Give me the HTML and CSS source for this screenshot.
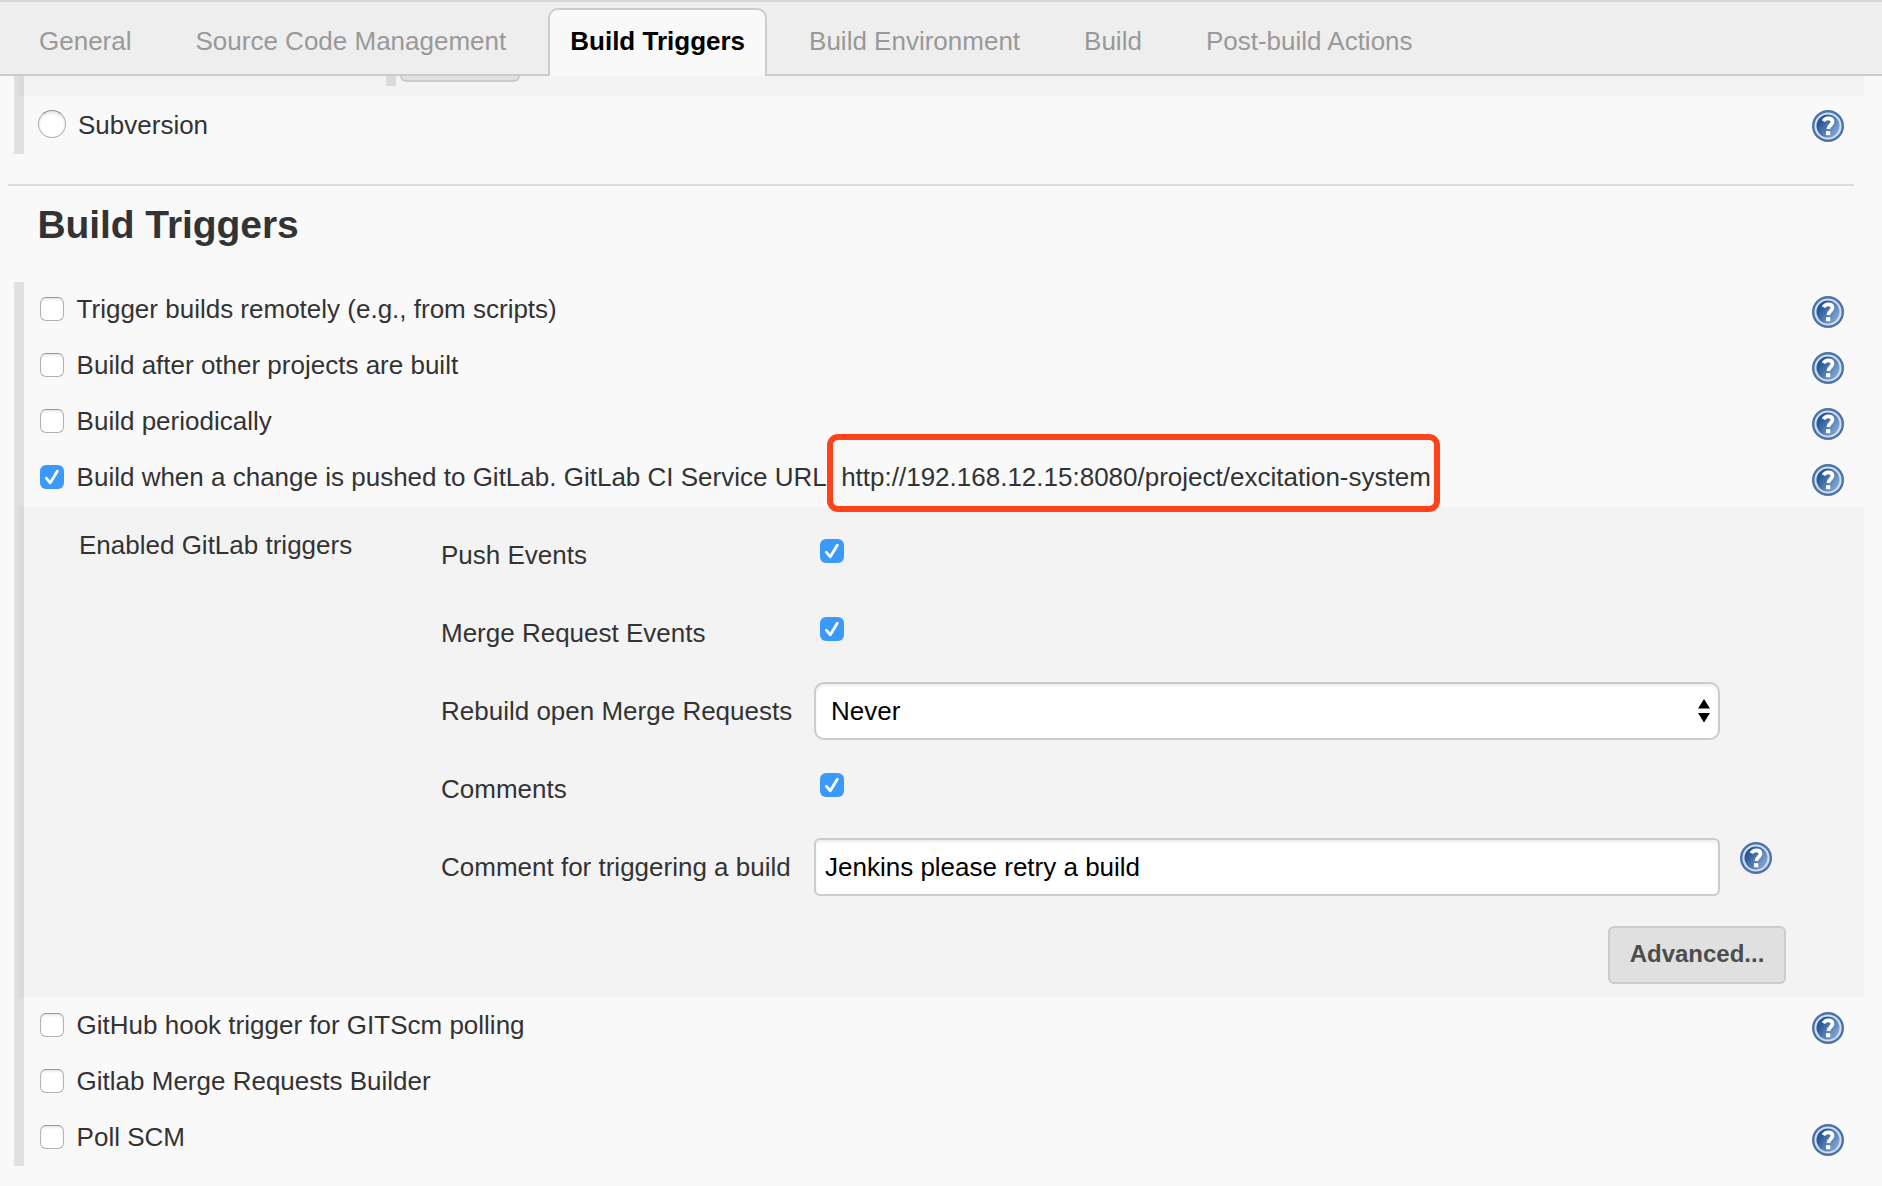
FILE: index.html
```html
<!DOCTYPE html>
<html lang="en">
<head>
<meta charset="utf-8">
<title>Build Triggers</title>
<link rel="stylesheet" href="styles.css">
</head>
<body>
<svg width="0" height="0" class="defs">
  <defs>
    <linearGradient id="blue" x1="0.05" y1="0.2" x2="0.95" y2="0.8">
      <stop offset="0.15" stop-color="#2a5796"/>
      <stop offset="1" stop-color="#86aad6"/>
    </linearGradient>
    <symbol id="help" viewBox="0 0 32 32">
      <circle cx="16" cy="16" r="16" fill="#4a72ab"/>
      <circle cx="16" cy="16" r="13.6" fill="#d3dfee"/>
      <circle cx="16" cy="16" r="11.5" fill="url(#blue)"/>
      <path d="M11.4 11.2C12.4 9.300 14 8.300 16.200 8.300c2.600 0 4.300 1.400 4.300 3.500 0 3.200-4.200 3.400-4.200 7.200" fill="none" stroke="#fff" stroke-width="3.7"/>
      <rect x="14" y="21.200" width="4.300" height="4" fill="#fff"/>
    </symbol>
    <symbol id="tick" viewBox="0 0 24 24">
      <path d="M6.3 13.2l4 4.6L17.3 6.3" fill="none" stroke="#fff" stroke-width="2.8" stroke-linecap="round" stroke-linejoin="round"/>
    </symbol>
  </defs>
</svg>

<nav class="tabs">
  <a class="tab">General</a>
  <a class="tab">Source Code Management</a>
  <a class="tab active">Build Triggers</a>
  <a class="tab">Build Environment</a>
  <a class="tab">Build</a>
  <a class="tab">Post-build Actions</a>
</nav>

<main>
  <section class="group scm">
    <div class="scm-tail"><span class="inner-bar"></span><span class="cut-button"></span></div>
    <div class="row radio-row"><span class="radio"></span><span class="label">Subversion</span><svg class="help"><use href="#help"/></svg></div>
  </section>

  <hr>
  <h1>Build Triggers</h1>

  <section class="group">
    <div class="row"><span class="check"></span><span class="label">Trigger builds remotely (e.g., from scripts)</span><svg class="help"><use href="#help"/></svg></div>
    <div class="row"><span class="check"></span><span class="label">Build after other projects are built</span><svg class="help"><use href="#help"/></svg></div>
    <div class="row"><span class="check"></span><span class="label">Build periodically</span><svg class="help"><use href="#help"/></svg></div>
    <div class="row"><span class="check on"><svg><use href="#tick"/></svg></span><span class="label">Build when a change is pushed to GitLab. GitLab CI Service URL: <span class="url">http://192.168.12.15:8080/project/excitation-system<span class="marker"></span></span></span><svg class="help"><use href="#help"/></svg></div>

    <div class="panel">
      <div class="panel-title">Enabled GitLab triggers</div>
      <div class="fields">
        <div class="field"><span class="name">Push Events</span><span class="check on"><svg><use href="#tick"/></svg></span></div>
        <div class="field"><span class="name">Merge Request Events</span><span class="check on"><svg><use href="#tick"/></svg></span></div>
        <div class="field"><span class="name">Rebuild open Merge Requests</span><div class="box select"><span>Never</span><svg width="12" height="24" viewBox="0 0 12 24"><path d="M0 9.500L6 0l6 9.500zM0 14l6 9.500L12 14z"/></svg></div></div>
        <div class="field"><span class="name">Comments</span><span class="check on"><svg><use href="#tick"/></svg></span></div>
        <div class="field"><span class="name">Comment for triggering a build</span><div class="box">Jenkins please retry a build</div><svg class="help"><use href="#help"/></svg></div>
        <div class="actions"><button>Advanced...</button></div>
      </div>
    </div>

    <div class="row"><span class="check"></span><span class="label">GitHub hook trigger for GITScm polling</span><svg class="help"><use href="#help"/></svg></div>
    <div class="row"><span class="check"></span><span class="label">Gitlab Merge Requests Builder</span></div>
    <div class="row"><span class="check"></span><span class="label">Poll SCM</span><svg class="help"><use href="#help"/></svg></div>
  </section>
</main>
</body>
</html>
```
FILE: styles.css
```css
* { box-sizing: border-box; }
body {
  margin: 0;
  height: 1186px;
  overflow: hidden;
  background: #f9f9f9;
  color: #333;
  font: 26px/30px "Liberation Sans", Arial, Helvetica, sans-serif;
  white-space: nowrap;
}
.defs { position: absolute; }

.tabs {
  display: flex;
  gap: 20px;
  height: 76px;
  padding: 6px 17px 0;
  background: #eee;
  border-top: 2px solid #d5d6cd;
  border-bottom: 2px solid #ccc;
}
.tab {
  height: 68px;
  padding: 16px 20px 0;
  border: 2px solid transparent;
  border-bottom: 0;
  color: #999;
}
.tab.active {
  background: #f9f9f9;
  border-color: #ccc;
  border-radius: 10px 10px 0 0;
  color: #000;
  font-weight: bold;
}

.group {
  margin-left: 14px;
  border-left: 10px solid #e0e0e0;
}
.scm { height: 78px; }
.scm-tail {
  display: flex;
  height: 20px;
  margin: 0 18px 0 -6px;
  padding-left: 368px;
  background: rgba(0, 0, 0, .025);
}
.inner-bar { width: 10px; height: 10px; background: #dadada; }
.cut-button {
  width: 120px;
  height: 6px;
  margin-left: 4px;
  background: #e0e0e0;
  border: 2px solid #ccc;
  border-top: 0;
  border-radius: 0 0 6px 6px;
}

.row {
  display: flex;
  height: 56px;
  padding: 0 38px 0 16px;
}
.row .check { margin-top: 15px; }
.row .label { flex: 1; margin: 12px 0 0 12.6px; }
.row .help { margin-top: 14px; }
.radio-row { padding-left: 14px; }
.radio-row .label { margin: 14px 0 0 12px; }
.radio {
  width: 28px;
  height: 28px;
  margin-top: 14px;
  border: 1px solid #b0b0b0;
  border-top-color: #8f8f8f;
  border-radius: 50%;
  background: #fff;
  box-shadow: inset 0 2px 3px #e4e4e4;
}
.check {
  flex: none;
  width: 24px;
  height: 24px;
  border: 1px solid #b2b2b2;
  border-top-color: #969696;
  border-radius: 6px;
  background: #fff;
  box-shadow: inset 0 2px 2px #ececec;
}
.check.on { border: 0; background: #3b99fc; box-shadow: none; }
.check svg { display: block; width: 24px; height: 24px; }
.help { flex: none; width: 32px; height: 32px; }

.url { position: relative; }
.marker {
  position: absolute;
  left: -14.6px;
  top: -28px;
  width: 613px;
  height: 78px;
  border: 6px solid #ff431d;
  border-radius: 11px;
}

hr {
  height: 2px;
  margin: 30px 28px 0 8px;
  border: 0;
  background: #ddd;
}
h1 {
  height: 96px;
  margin: 0;
  padding: 16px 0 0 37.5px;
  font-size: 39px;
  line-height: 46px;
  letter-spacing: -.08px;
}

.panel {
  display: flex;
  height: 492px;
  margin: 0 18px 0 -6px;
  padding-left: 61px;
  background: rgba(0, 0, 0, .025);
}
.panel-title { width: 362px; padding-top: 24px; }
.fields { padding-top: 20px; }
.field {
  display: flex;
  height: 78px;
}
.field .name { width: 373px; padding-top: 14px; }
.field .check { margin: 13px 0 0 6px; }
.field .help { margin: 4px 0 0 20px; }
.box {
  width: 906px;
  height: 58px;
  padding: 12px 9px;
  border: 2px solid #ccc;
  border-radius: 6px;
  background: #fff;
  box-shadow: inset 0 2px 3px #ededed;
  color: #000;
}
.select {
  display: flex;
  justify-content: space-between;
  padding: 12px 8px 12px 15px;
  border-radius: 10px;
}
.select svg { margin-top: 3px; }
.actions { display: flex; justify-content: flex-end; padding-top: 10px; width: 1345px; }
button {
  width: 178px;
  height: 58px;
  padding: 0 0 3px;
  border: 2px solid #ccc;
  border-radius: 6px;
  background: #e0e0e0;
  color: #4d4d4d;
  font: bold 24px "Liberation Sans", Arial, sans-serif;
}
```
